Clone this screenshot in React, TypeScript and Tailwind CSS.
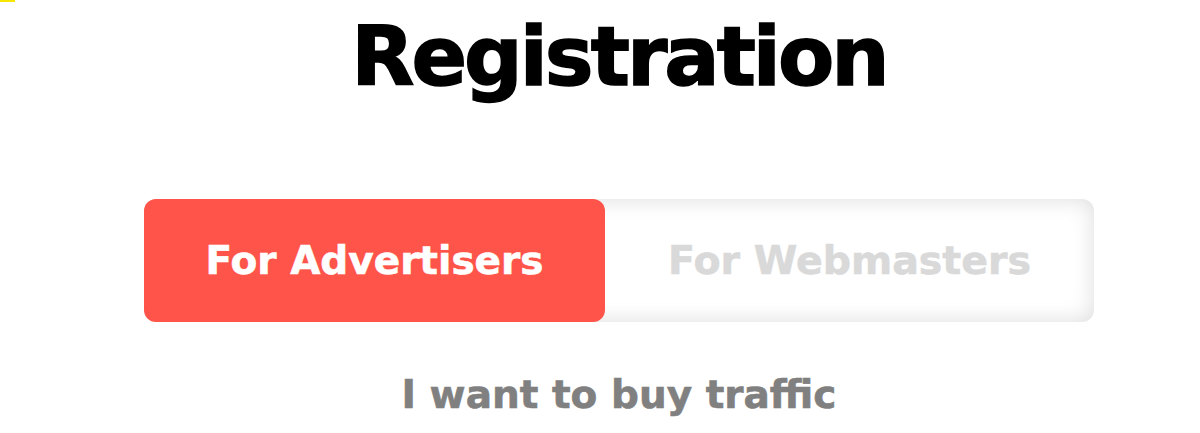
import React from "react";

export default function App() {
  const font = { fontFamily: '"DejaVu Sans", "Liberation Sans", sans-serif' };
  return (
    <div className="relative w-[1200px] h-[433px] bg-white overflow-hidden" style={font}>
      <div className="absolute left-0 top-0 w-[15px] h-[2px] bg-[#f7e600]" />
      <div className="flex flex-col items-center pl-[38px]">
        <h1 className="mt-[16px] h-[82px] text-[82px] leading-none font-bold text-black tracking-[-3px] [-webkit-text-stroke:1.5px_black]">
          Registration
        </h1>
        <div className="mt-[101px] flex w-[950px] h-[123px] rounded-[12px] bg-white shadow-[inset_0_0_22px_rgba(0,0,0,0.14)]">
          <div className="w-[461px] h-full rounded-[12px] bg-[#ff5449] flex items-center justify-center">
            <span className="text-[39px] font-bold text-white leading-none [-webkit-text-stroke:0.6px_white]">For Advertisers</span>
          </div>
          <div className="flex-1 h-full flex items-center justify-center">
            <span className="text-[39.5px] font-bold text-[#d9d9d9] leading-none [-webkit-text-stroke:0.6px_#d9d9d9]">For Webmasters</span>
          </div>
        </div>
        <p className="mt-[53px] text-[39px] leading-none font-bold text-[#808080] [-webkit-text-stroke:0.6px_#808080]">I want to buy traffic</p>
      </div>
    </div>
  );
}
